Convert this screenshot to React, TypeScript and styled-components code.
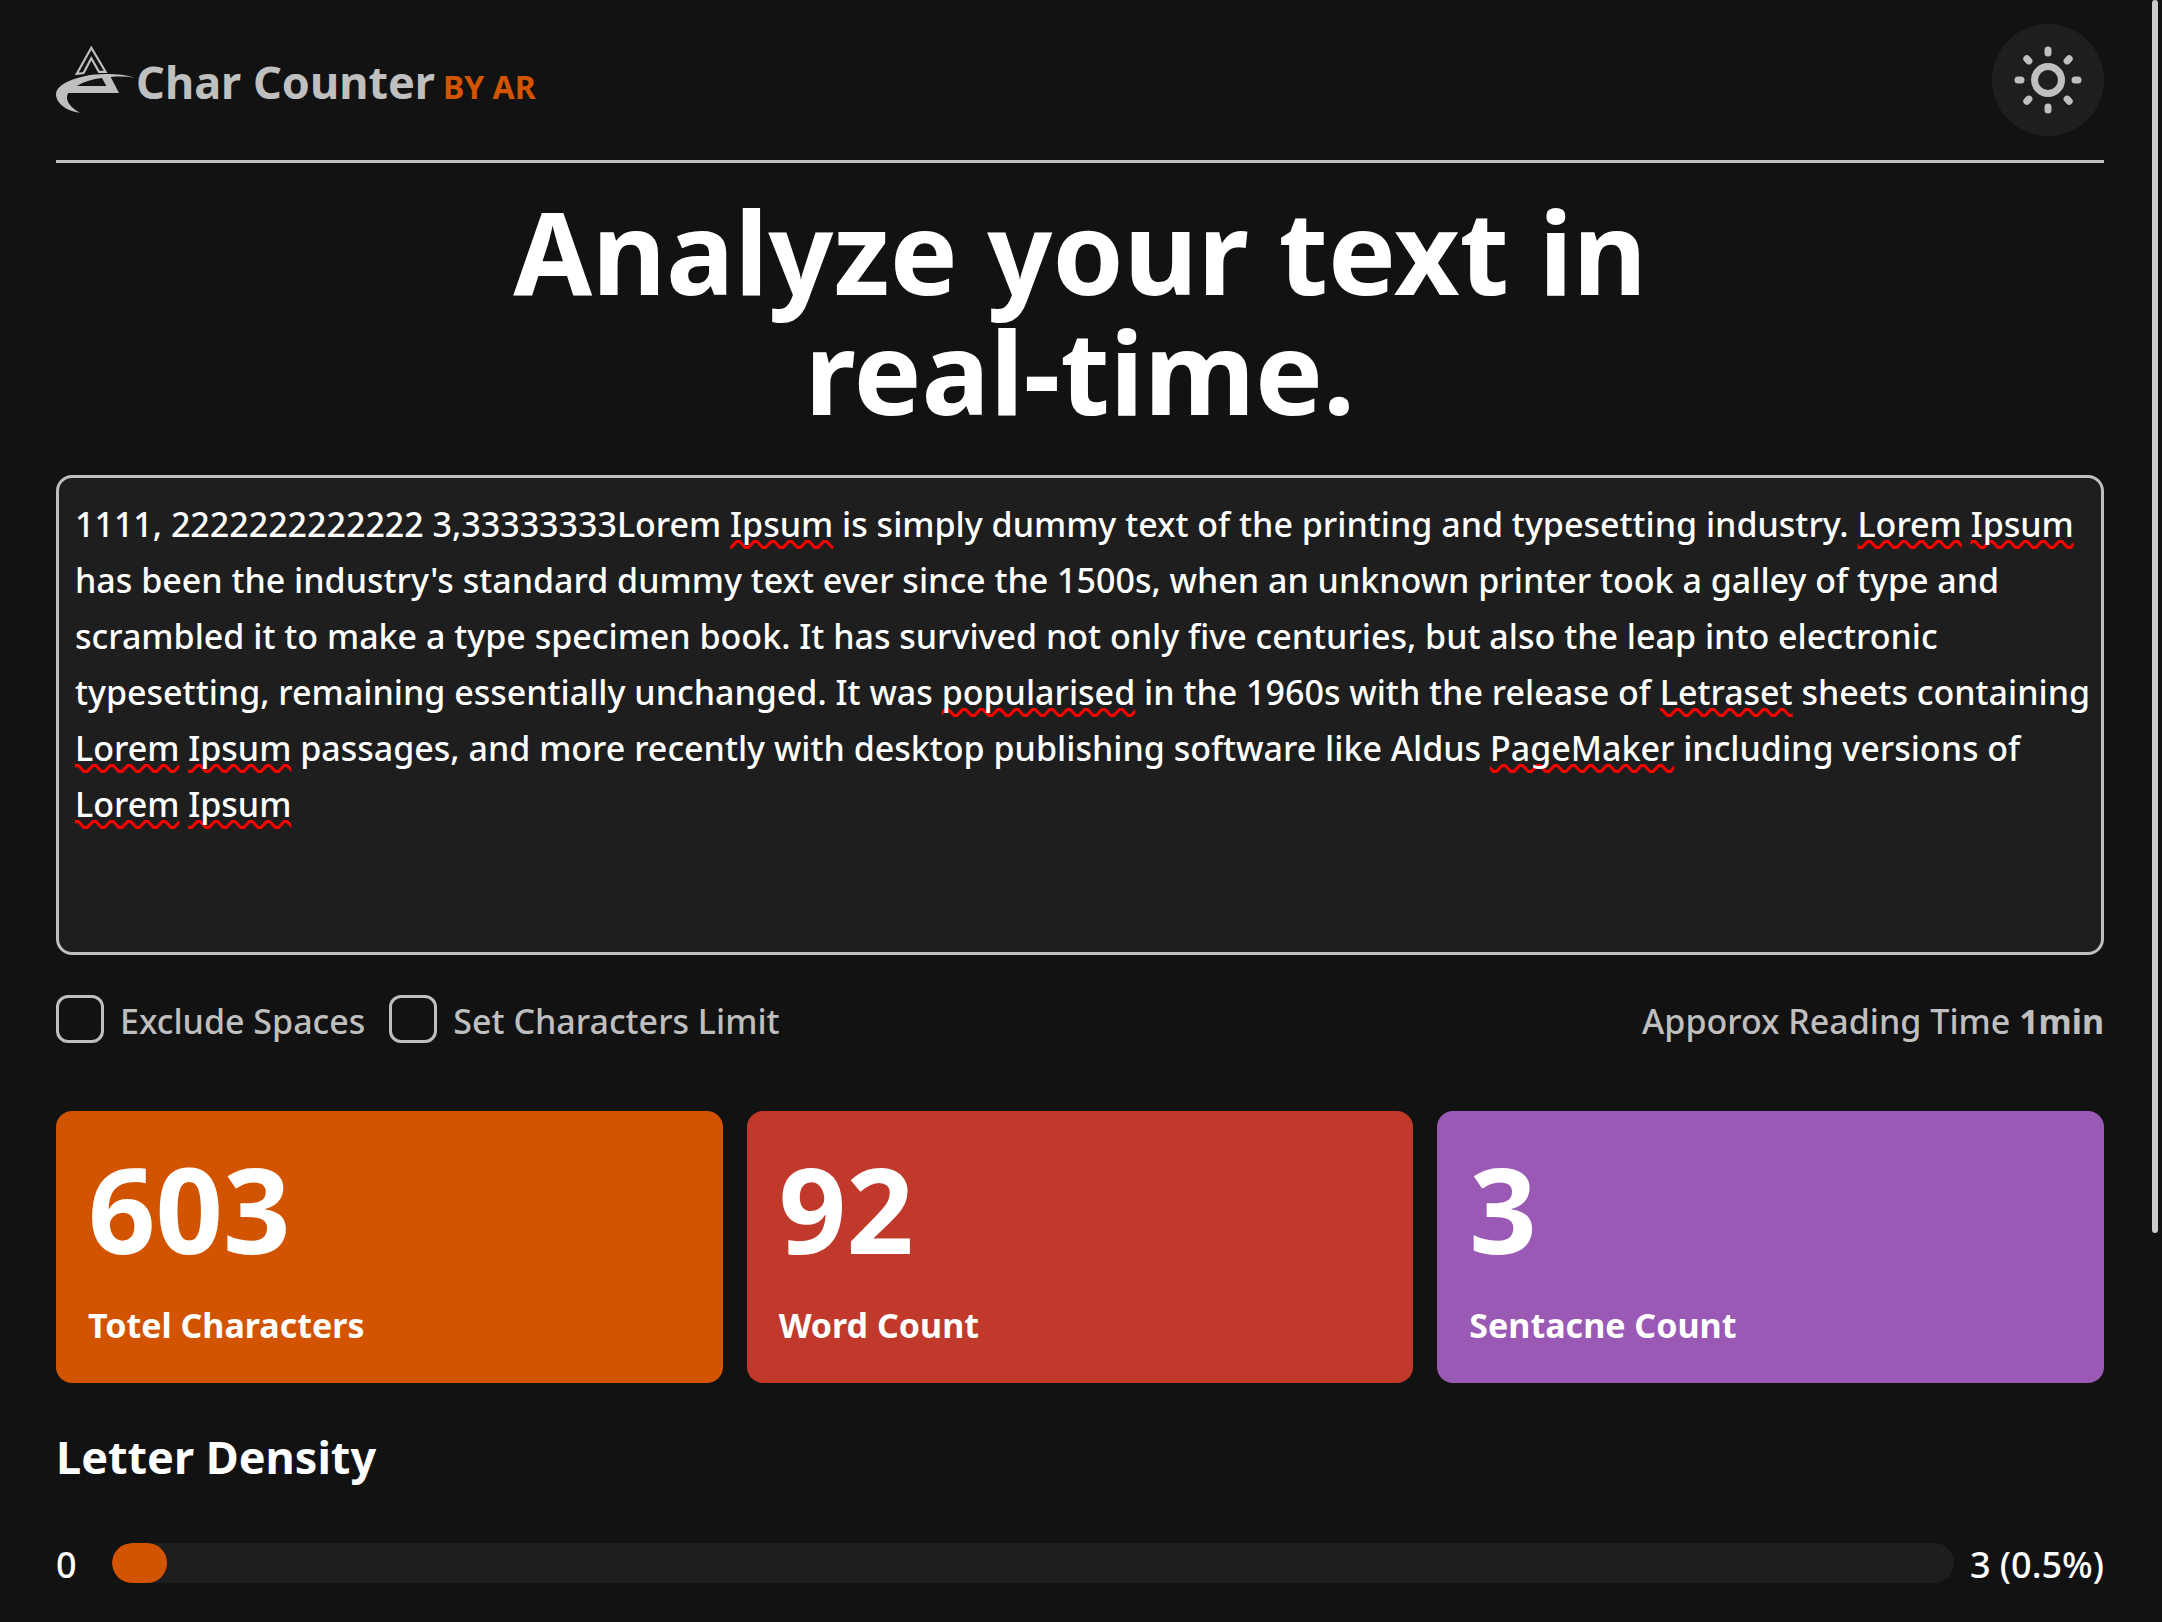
import React, { useLayoutEffect, useRef, useState } from "react";
import styled, { createGlobalStyle } from "styled-components";

const GlobalStyle = createGlobalStyle`
  *, *::before, *::after { box-sizing: border-box; }
  body {
    margin: 0;
    background: #121212;
    color: #ffffff;
    font-family: "Noto Sans", "Open Sans", sans-serif;
    font-size: 34px;
    line-height: 56px;
    font-weight: 500;
  }
  h1, h2, p { margin: 0; }
`;

const Page = styled.div`
  min-height: 100vh;
  padding: 24px 58px 24px 56px;
`;

const ScrollThumb = styled.div`
  position: fixed;
  top: 0;
  right: 4px;
  width: 6px;
  height: 76vh;
  border-radius: 3px;
  background: #cccccc;
`;

const Header = styled.header`
  display: flex;
  align-items: center;
  justify-content: space-between;
  padding-bottom: 24px;
  border-bottom: 3px solid #bfbfbf;
`;

const Brand = styled.a`
  display: flex;
  align-items: center;
  color: #bfbfbf;
  text-decoration: none;
`;

const BrandText = styled.span`
  display: flex;
  align-items: baseline;
  gap: 8px;
  padding-top: 8px;
  line-height: 64px;
  font-weight: 700;
`;

const BrandName = styled.span`
  font-size: 45px;
`;

const BrandBy = styled.span`
  font-size: 32px;
  color: #d35400;
`;

const ThemeButton = styled.button`
  display: grid;
  place-items: center;
  width: 112px;
  height: 112px;
  padding: 0;
  border: 0;
  border-radius: 50%;
  background: #1e1e1e;
  color: #bfbfbf;
`;

const Title = styled.h1`
  max-width: 1280px;
  margin: 28px auto 44px;
  font-size: 114px;
  line-height: 120px;
  font-weight: 700;
  text-align: center;
`;

const Editor = styled.div`
  display: grid;
  height: 480px;
  border: 3px solid #bfbfbf;
  border-radius: 16px;
  background: #1e1e1e;
  overflow: hidden;
`;

const TextInput = styled.textarea`
  grid-area: 1 / 1;
  width: 100%;
  height: 100%;
  margin: 0;
  padding: 18px 8px 18px 16px;
  border: 0;
  outline: 0;
  resize: none;
  background: transparent;
  color: #ffffff;
  font: inherit;
  overflow: hidden;
`;

const SpellingMarks = styled.svg`
  grid-area: 1 / 1;
  width: 100%;
  height: 100%;
  pointer-events: none;
`;

const Options = styled.div`
  display: flex;
  align-items: center;
  gap: 24px;
  height: 48px;
  margin-top: 40px;
  color: #bfbfbf;
`;

const Option = styled.label`
  display: flex;
  align-items: center;
  gap: 16px;
`;

const OptionText = styled.span`
  padding-top: 4px;
`;

const Checkbox = styled.input`
  appearance: none;
  width: 48px;
  height: 48px;
  margin: 0;
  border: 3px solid #bfbfbf;
  border-radius: 12px;
  &:checked { background: #d35400; }
`;

const ReadingTime = styled.p`
  margin-left: auto;
  padding-top: 4px;
`;

const Cards = styled.section`
  display: grid;
  grid-template-columns: repeat(3, 1fr);
  gap: 24px;
  margin-top: 68px;
`;

const Card = styled.article<{ $tone: string }>`
  display: flex;
  flex-direction: column;
  gap: 24px;
  padding: 34px 32px 30px;
  border-radius: 16px;
  background: ${(p) => p.$tone};
  font-weight: 700;
`;

const Figure = styled.span`
  font-size: 118px;
  line-height: 128px;
`;

const SectionTitle = styled.h2`
  margin-top: 42px;
  font-size: 45px;
  line-height: 64px;
  font-weight: 700;
`;

const DensityRow = styled.div`
  display: flex;
  align-items: center;
  gap: 16px;
  margin-top: 44px;
  font-size: 36px;
`;

const Letter = styled.span`
  width: 40px;
  padding-top: 4px;
`;

const Share = styled.span`
  padding-top: 4px;
`;

const Track = styled.div`
  flex: 1;
  height: 40px;
  border-radius: 20px;
  background: #1e1e1e;
  overflow: hidden;
`;

const Fill = styled.div`
  height: 100%;
  border-radius: 20px;
  background: #d35400;
`;

const SAMPLE =
  "1111, 2222222222222 3,33333333Lorem Ipsum is simply dummy text of the printing and typesetting industry. Lorem Ipsum has been the industry's standard dummy text ever since the 1500s, when an unknown printer took a galley of type and scrambled it to make a type specimen book. It has survived not only five centuries, but also the leap into electronic typesetting, remaining essentially unchanged. It was popularised in the 1960s with the release of Letraset sheets containing Lorem Ipsum passages, and more recently with desktop publishing software like Aldus PageMaker including versions of Lorem Ipsum";

const UNKNOWN_WORDS = /\b(Lorem|Ipsum|popularised|Letraset|PageMaker)\b/g;

const LINE = 56;

const STATS = [
  { value: "603", label: "Totel Characters", tone: "#d35400" },
  { value: "92", label: "Word Count", tone: "#c0392b" },
  { value: "3", label: "Sentacne Count", tone: "#9b59b6" },
];

const DENSITY = [{ letter: "0", text: "3 (0.5%)", width: 3 }];

type Mark = { x: number; y: number; width: number };

// Lays the text out in a throwaway copy of the box and reads where each word falls.
function measureMarks(input: HTMLTextAreaElement, text: string): Mark[] {
  const copy = document.createElement("div");
  const css = getComputedStyle(input);
  Object.assign(copy.style, {
    position: "absolute",
    top: "0",
    left: "0",
    visibility: "hidden",
    whiteSpace: "pre-wrap",
    overflowWrap: "break-word",
    width: `${input.clientWidth}px`,
    padding: css.padding,
    font: css.font,
    lineHeight: css.lineHeight,
  });
  const node = document.createTextNode(text);
  copy.appendChild(node);
  document.body.appendChild(copy);
  const origin = copy.getBoundingClientRect();
  const top = parseFloat(css.paddingTop);
  const marks = [...text.matchAll(UNKNOWN_WORDS)].map((m) => {
    const range = document.createRange();
    range.setStart(node, m.index!);
    range.setEnd(node, m.index! + m[0].length);
    const box = range.getBoundingClientRect();
    const row = Math.floor((box.top + box.height / 2 - origin.top - top) / LINE);
    return { x: box.left - origin.left, y: (row + 1) * LINE, width: box.width };
  });
  copy.remove();
  return marks;
}

function Logo() {
  return (
    <svg width="80" height="68" viewBox="0 0 80 68" aria-hidden="true">
      <path
        d="M35.3 1.8 20.8 27.8 27.6 27 35.3 12.2 43 25.8H49.6Z"
        fill="none"
        stroke="#bfbfbf"
        strokeWidth="2.2"
      />
      <path
        d="M79 31.7C70 29 61 28 52 28 36 27.6 20 31 9 37 2 41 0 45 0 48.5 0 56 9 65 24 66.7 13 61 8.5 53 12.3 47H63L54.7 31C63 30.2 71 30.5 79 31.7ZM20.7 40C28 35.5 37 33 46 32L50.3 40Z"
        fill="#bfbfbf"
        fillRule="evenodd"
      />
    </svg>
  );
}

function SunIcon() {
  return (
    <svg
      width="68"
      height="68"
      viewBox="-34 -34 68 68"
      fill="none"
      stroke="currentColor"
      strokeWidth="7"
      strokeLinecap="round"
      aria-hidden="true"
    >
      <circle r="13.5" />
      {[0, 45, 90, 135, 180, 225, 270, 315].map((angle) => (
        <path key={angle} d="M0 -27V-30" transform={`rotate(${angle})`} />
      ))}
    </svg>
  );
}

export default function App() {
  const [text, setText] = useState(SAMPLE);
  const [marks, setMarks] = useState<Mark[]>([]);
  const inputRef = useRef<HTMLTextAreaElement>(null);

  useLayoutEffect(() => {
    const input = inputRef.current!;
    const update = () => setMarks(measureMarks(input, text));
    update();
    const observer = new ResizeObserver(update);
    observer.observe(input);
    return () => observer.disconnect();
  }, [text]);

  return (
    <>
      <GlobalStyle />
      <ScrollThumb />
      <Page>
        <Header>
          <Brand href="#">
            <Logo />
            <BrandText>
              <BrandName>Char Counter</BrandName>
              <BrandBy>BY AR</BrandBy>
            </BrandText>
          </Brand>
          <ThemeButton type="button" aria-label="Switch theme">
            <SunIcon />
          </ThemeButton>
        </Header>
        <main>
          <Title>Analyze your text in real-time.</Title>
          <Editor>
            <SpellingMarks aria-hidden="true">
              <defs>
                <pattern id="squiggle" width="17.4" height={LINE} patternUnits="userSpaceOnUse">
                  <path
                    d="M-9.7 13.5H-6.7L-1 7.5H2L7.7 13.5H10.7L16.4 7.5H19.4"
                    fill="none"
                    stroke="#ff0000"
                    strokeWidth="3"
                  />
                </pattern>
              </defs>
              {marks.map((m, i) => (
                <rect key={i} x={m.x} y={m.y} width={m.width} height="20" fill="url(#squiggle)" />
              ))}
            </SpellingMarks>
            <TextInput
              ref={inputRef}
              aria-label="Text to analyze"
              spellCheck={false}
              value={text}
              onChange={(e) => setText(e.target.value)}
            />
          </Editor>
          <Options>
            <Option>
              <Checkbox type="checkbox" />
              <OptionText>Exclude Spaces</OptionText>
            </Option>
            <Option>
              <Checkbox type="checkbox" />
              <OptionText>Set Characters Limit</OptionText>
            </Option>
            <ReadingTime>
              Apporox Reading Time <strong>1min</strong>
            </ReadingTime>
          </Options>
          <Cards>
            {STATS.map((s) => (
              <Card key={s.label} $tone={s.tone}>
                <Figure>{s.value}</Figure>
                <span>{s.label}</span>
              </Card>
            ))}
          </Cards>
          <SectionTitle>Letter Density</SectionTitle>
          {DENSITY.map((d) => (
            <DensityRow key={d.letter}>
              <Letter>{d.letter}</Letter>
              <Track role="progressbar" aria-label={d.letter} aria-valuenow={d.width}>
                <Fill style={{ width: `${d.width}%` }} />
              </Track>
              <Share>{d.text}</Share>
            </DensityRow>
          ))}
        </main>
      </Page>
    </>
  );
}
